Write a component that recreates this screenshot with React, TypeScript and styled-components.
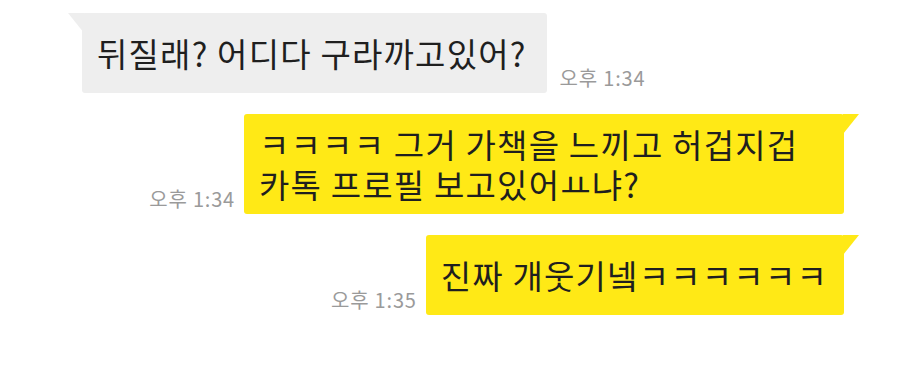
import React from 'react';
import styled, { createGlobalStyle } from 'styled-components';

interface Message {
  id: number;
  mine: boolean;
  text: string;
  time: string;
}

const messages: Message[] = [
  { id: 1, mine: false, text: '뒤질래? 어디다 구라까고있어?', time: '오후 1:34' },
  { id: 2, mine: true, text: 'ㅋㅋㅋㅋ 그거 가책을 느끼고 허겁지겁 카톡 프로필 보고있어ㅛ냐?', time: '오후 1:34' },
  { id: 3, mine: true, text: '진짜 개웃기넼ㅋㅋㅋㅋㅋㅋ', time: '오후 1:35' },
];

const GlobalStyle = createGlobalStyle`
  html, body {
    margin: 0;
    padding: 0;
    background: #ffffff;
  }
  body {
    font-family: 'Noto Sans CJK KR', 'Noto Sans', sans-serif;
  }
`;

const Chat = styled.div`
  width: 900px;
  height: 392px;
  box-sizing: border-box;
  padding: 13px 56px 0 82px;
  display: flex;
  flex-direction: column;
  gap: 21px;
  background: #ffffff;
`;

const Row = styled.div<{ mine: boolean }>`
  display: flex;
  flex-direction: ${({ mine }) => (mine ? 'row-reverse' : 'row')};
  align-items: flex-end;
  justify-content: flex-start;
  gap: ${({ mine }) => (mine ? '9px' : '13px')};
`;

const Bubble = styled.div<{ mine: boolean }>`
  position: relative;
  box-sizing: border-box;
  min-height: 80px;
  max-width: 600px;
  display: flex;
  align-items: center;
  padding: ${({ mine }) => (mine ? '10px 16px 10px 15px' : '10px 20px 10px 15px')};
  border-radius: 3px;
  background: ${({ mine }) => (mine ? '#ffe916' : '#eeeeee')};
  color: #1f1f1f;
  font-size: 33px;
  line-height: 40px;
  letter-spacing: 1.2px;
  word-break: keep-all;

  &::before {
    content: '';
    position: absolute;
    top: 0;
    width: 16px;
    height: 20px;
    background: inherit;
    ${({ mine }) =>
      mine
        ? `
      right: -15px;
      clip-path: polygon(0 0, 100% 0, 0 100%);
    `
        : `
      left: -14px;
      clip-path: polygon(0 0, 100% 0, 100% 100%);
    `}
  }
`;

const Time = styled.span`
  flex-shrink: 0;
  margin-bottom: 3px;
  font-size: 20px;
  line-height: 24px;
  letter-spacing: 0.8px;
  color: #9a9a9a;
  white-space: nowrap;
`;

const App: React.FC = () => {
  return (
    <>
      <GlobalStyle />
      <Chat>
        {messages.map(m => (
          <Row key={m.id} mine={m.mine}>
            <Bubble mine={m.mine}>{m.text}</Bubble>
            <Time>{m.time}</Time>
          </Row>
        ))}
      </Chat>
    </>
  );
};

export default App;
